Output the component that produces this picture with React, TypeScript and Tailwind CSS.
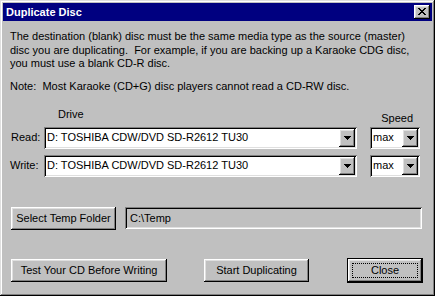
import React from "react";

const raised =
  "shadow-[inset_-1px_-1px_0_#000,inset_1px_1px_0_#fff,inset_-2px_-2px_0_#808080,inset_2px_2px_0_#dfdfdf]";
const sunken =
  "shadow-[inset_1px_1px_0_#808080,inset_-1px_-1px_0_#fff,inset_2px_2px_0_#000,inset_-2px_-2px_0_#dfdfdf]";

const Arrow = () => (
  <svg width="7" height="4" viewBox="0 0 7 4" shapeRendering="crispEdges">
    <path d="M0 0h7v1H0zM1 1h5v1H1zM2 2h3v1H2zM3 3h1v1H3z" fill="#000" />
  </svg>
);

const Combo = ({ value, width }: { value: string; width: string }) => (
  <div className={`${width} h-[22px] bg-white ${sunken} flex items-center p-[2px]`}>
    <span className="flex-1 pl-[1px] leading-[13px] whitespace-nowrap overflow-hidden">
      {value}
    </span>
    <div className={`w-[16px] h-[18px] bg-[#c0c0c0] ${raised} flex items-center justify-center`}>
      <Arrow />
    </div>
  </div>
);

const Button = ({ label, width }: { label: string; width: string }) => (
  <button
    className={`${width} h-[23px] bg-[#c0c0c0] ${raised} flex items-center justify-center leading-[13px]`}
  >
    {label}
  </button>
);

const App = () => {
  return (
    <div className="w-[435px] h-[296px] bg-[#c0c0c0] p-[3px] flex flex-col text-[11px] text-black font-['Liberation_Sans',Arial,sans-serif] shadow-[inset_-1px_-1px_0_#000,inset_1px_1px_0_#dfdfdf,inset_-2px_-2px_0_#808080,inset_2px_2px_0_#fff]">
      <div className="h-[18px] bg-[#000080] flex items-center justify-between pl-[3px] pr-[2px]">
        <span className="text-white font-bold text-[11px] leading-[13px]">
          Duplicate Disc
        </span>
        <div className={`w-[16px] h-[14px] bg-[#c0c0c0] ${raised} flex items-center justify-center pb-[1px]`}>
          <svg width="8" height="7" viewBox="0 0 8 7" shapeRendering="crispEdges">
            <path
              d="M0 0h2v1H0zM6 0h2v1H6zM1 1h2v1H1zM5 1h2v1H5zM2 2h4v1H2zM3 3h2v1H3zM2 4h4v1H2zM1 5h2v1H1zM5 5h2v1H5zM0 6h2v1H0zM6 6h2v1H6z"
              fill="#000"
            />
          </svg>
        </div>
      </div>

      <div className="flex flex-col px-[7px]">
        <p className="mt-[9px] leading-[13.5px]">
          The destination (blank) disc must be the same media type as the source (master)
          <br />
          disc you are duplicating.&nbsp; For example, if you are backing up a Karaoke CDG disc,
          <br />
          you must use a blank CD-R disc.
        </p>
        <p className="mt-[9px] leading-[13px]">
          Note:&nbsp; Most Karaoke (CD+G) disc players cannot read a CD-RW disc.
        </p>

        <div className="mt-[15px] h-[17px] flex leading-[13px]">
          <span className="ml-[48px]">Drive</span>
          <span className="ml-auto mr-[12px] mt-[4px]">Speed</span>
        </div>

        <div className="mt-[2px] flex items-center">
          <span className="w-[34px] pl-[1px]">Read:</span>
          <Combo value="D: TOSHIBA CDW/DVD SD-R2612 TU30" width="w-[313px]" />
          <div className="ml-[13px]">
            <Combo value="max" width="w-[50px]" />
          </div>
        </div>

        <div className="mt-[6px] flex items-center">
          <span className="w-[34px]">Write:</span>
          <Combo value="D: TOSHIBA CDW/DVD SD-R2612 TU30" width="w-[313px]" />
          <div className="ml-[13px]">
            <Combo value="max" width="w-[50px]" />
          </div>
        </div>

        <div className="mt-[30px] flex items-center">
          <div className="ml-[1px]">
            <Button label="Select Temp Folder" width="w-[105px]" />
          </div>
          <div className={`ml-[9px] w-[297px] h-[22px] ${sunken} flex items-center pl-[5px] leading-[13px]`}>
            C:\Temp
          </div>
        </div>

        <div className="mt-[28px] flex items-center h-[25px]">
          <div className="ml-[1px]">
            <Button label="Test Your CD Before Writing" width="w-[156px]" />
          </div>
          <div className="ml-[37px]">
            <Button label="Start Duplicating" width="w-[105px]" />
          </div>
          <div className="ml-[38px] border border-black">
            <button
              className={`w-[74px] h-[23px] bg-[#c0c0c0] ${raised} flex items-center justify-center p-[4px]`}
            >
              <span className="w-full h-full border border-dotted border-black flex items-center justify-center leading-[13px]">
                Close
              </span>
            </button>
          </div>
        </div>
      </div>
    </div>
  );
};

export default App;
